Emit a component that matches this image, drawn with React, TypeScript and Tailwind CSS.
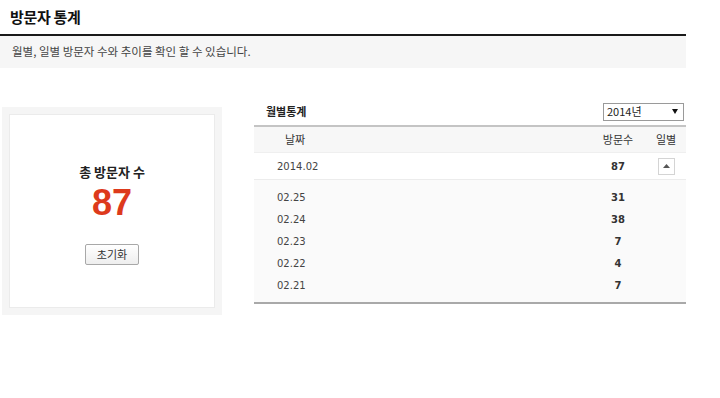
import React from "react";

const KR = { fontFamily: '"Noto Sans CJK KR", "Noto Sans", sans-serif' };

export default function App() {
  const days = [
    ["02.25", "31"],
    ["02.24", "38"],
    ["02.23", "7"],
    ["02.22", "4"],
    ["02.21", "7"],
  ];
  return (
    <div className="w-[720px] h-[398px] bg-white overflow-hidden" style={KR}>
      <div className="w-[686px]">
        <div className="h-[36px] pl-[10px] pt-[7px] border-b-2 border-[#1a1a1a]">
          <h1 className="text-[15px] leading-[20px] font-bold text-[#111] tracking-[-0.3px]">방문자 통계</h1>
        </div>
        <div className="h-[32px] bg-[#f6f6f6] pl-[12px] flex items-center text-[11.5px] text-[#444]">
          월별, 일별 방문자 수와 추이를 확인 할 수 있습니다.
        </div>
        <div className="flex mt-[39px]">
          <div className="ml-[2px] w-[220px] h-[208px] bg-[#f5f5f5] p-[7px]">
            <div className="w-full h-full bg-white border border-[#ebebeb] flex flex-col items-center">
              <div className="mt-[48px] text-[13px] leading-[18px] font-bold text-[#222]">총 방문자 수</div>
              <div
                className="mt-[4px] text-[36px] leading-[36px] font-bold text-[#dd3a1c]"
                style={{ fontFamily: '"Liberation Sans", Arial, sans-serif' }}
              >
                87
              </div>
              <button className="mt-[23px] w-[54px] h-[21px] border border-[#a8a8a8] rounded-[2px] bg-gradient-to-b from-white to-[#eeeeee] text-[11px] leading-[19px] text-[#333]">
                초기화
              </button>
            </div>
          </div>
          <div className="ml-[32px] flex-1 -mt-[7px]">
            <div className="h-[23px] flex items-center justify-between">
              <span className="pl-[12px] text-[11px] font-bold text-[#222]">월별통계</span>
              <div className="mr-[2px] w-[81px] h-[18px] border border-[#9a9a9a] flex items-center justify-between pl-[3px] pr-[5px] text-[11px] text-[#222]">
                <span>2014년</span>
                <svg width="6" height="5" viewBox="0 0 6 5">
                  <path d="M0 0 L6 0 L3 5 Z" fill="#111" />
                </svg>
              </div>
            </div>
            <div className="mt-[2px] border-t-2 border-[#c4c4c4]">
              <div className="h-[26px] bg-[#f7f7f7] grid grid-cols-[1fr_56px_40px] items-center text-[11px] text-[#333] border-b border-[#efefef]">
                <span className="pl-[31px]">날짜</span>
                <span className="text-center">방문수</span>
                <span className="text-center">일별</span>
              </div>
              <div
                className="h-[27px] bg-white grid grid-cols-[1fr_56px_40px] items-center text-[10px] text-[#444] border-b border-[#ececec]"
                style={{ fontFamily: '"DejaVu Sans", Verdana, sans-serif' }}
              >
                <span className="pl-[23px]">2014.02</span>
                <span className="text-center font-bold text-[#333]">87</span>
                <span className="flex justify-center">
                  <span className="w-[17px] h-[17px] border border-[#d4d4d4] bg-white flex items-center justify-center">
                    <svg width="7" height="4" viewBox="0 0 7 4">
                      <path d="M0 4 L3.5 0 L7 4 Z" fill="#555" />
                    </svg>
                  </span>
                </span>
              </div>
              <div
                className="bg-[#fafafa] pt-[6px] pb-[6px] text-[10px] text-[#444]"
                style={{ fontFamily: '"DejaVu Sans", Verdana, sans-serif' }}
              >
                {days.map(([d, n]) => (
                  <div key={d} className="h-[22px] grid grid-cols-[1fr_56px_40px] items-center">
                    <span className="pl-[23px]">{d}</span>
                    <span className="text-center font-bold text-[#333]">{n}</span>
                    <span />
                  </div>
                ))}
              </div>
              <div className="border-t-2 border-[#a9a9a9]" />
            </div>
          </div>
        </div>
      </div>
    </div>
  );
}
